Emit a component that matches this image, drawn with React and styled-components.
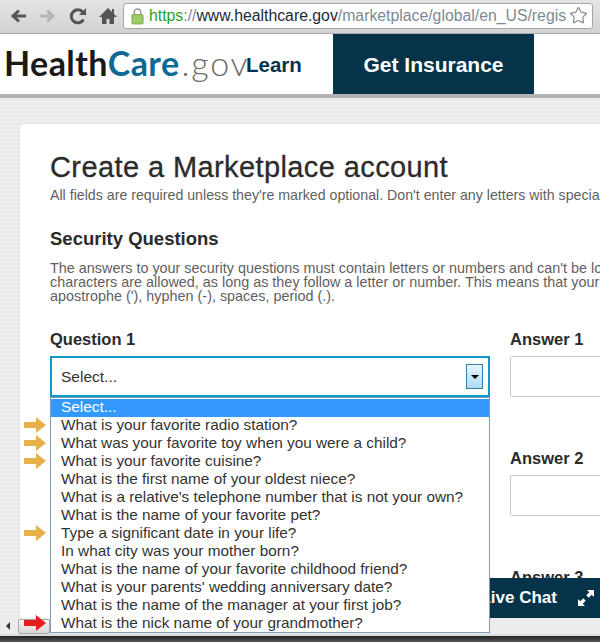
import React from "react";
import styled, { createGlobalStyle } from "styled-components";
import { Star } from "lucide-react";

const questions = [
    { text: "What is your favorite radio station?", mark: "orange" },
    { text: "What was your favorite toy when you were a child?", mark: "orange" },
    { text: "What is your favorite cuisine?", mark: "orange" },
    { text: "What is the first name of your oldest niece?" },
    { text: "What is a relative's telephone number that is not your own?" },
    { text: "What is the name of your favorite pet?" },
    { text: "Type a significant date in your life?", mark: "orange" },
    { text: "In what city was your mother born?" },
    { text: "What is the name of your favorite childhood friend?" },
    { text: "What is your parents' wedding anniversary date?" },
    { text: "What is the name of the manager at your first job?" },
    { text: "What is the nick name of your grandmother?", mark: "red" },
];

const Arrow = ({ color }) => (
    <ArrowSvg viewBox="0 0 22 16">
        <path d="M0 5h12V0l10 8-10 8v-5H0z" fill={color === "red" ? "#e5201c" : "#e8b04a"} />
    </ArrowSvg>
);

const App = () => {
    return (
        <Screen>
            <GlobalStyle />
            <Toolbar>
                <NavGroup>
                    <NavIcon viewBox="0 0 20 20">
                        <path d="M18 10H7M11 4.500L5 10l6 5.500" fill="none" stroke="#555" strokeWidth="3" />
                    </NavIcon>
                    <NavIcon viewBox="0 0 20 20">
                        <path d="M2 10h11M9 4.500l6 5.500-6 5.500" fill="none" stroke="#b5b5b5" strokeWidth="3" />
                    </NavIcon>
                    <NavIcon viewBox="0 0 20 20">
                        <path d="M15.500 13.500a6.500 6.500 0 1 1-.6-7.200" fill="none" stroke="#555" strokeWidth="3" />
                        <path d="M18 2v7h-7z" fill="#555" />
                    </NavIcon>
                    <NavIcon viewBox="0 0 20 20">
                        <path d="M10 2L1 11h3v7h4.500v-5h3v5H16v-7h3l-3-3V3h-2v3z" fill="#555" />
                    </NavIcon>
                </NavGroup>
                <UrlBar>
                    <LockIcon viewBox="0 0 14 18">
                        <path d="M3.500 8V5a3.500 3.500 0 0 1 7 0v3" fill="none" stroke="#9a9a9a" strokeWidth="1.600" />
                        <rect x="1" y="7.500" width="12" height="10" rx="1" fill="#9ccc65" stroke="#7fa650" />
                    </LockIcon>
                    <Url>
                        <UrlPart $tone="green">https</UrlPart>
                        <UrlPart $tone="gray">://</UrlPart>
                        <UrlPart $tone="dark">www.healthcare.gov</UrlPart>
                        <UrlPart $tone="gray">/marketplace/global/en_US/regis</UrlPart>
                    </Url>
                    <Star size={19} color="#8a8a8a" strokeWidth={1.500} />
                </UrlBar>
            </Toolbar>
            <Header>
                <Logo>
                    Health<LogoBlue>Care</LogoBlue>
                    <LogoGov>.gov</LogoGov>
                </Logo>
                <LearnLink>Learn</LearnLink>
                <InsuranceLink>Get Insurance</InsuranceLink>
            </Header>
            <Page>
                <Card>
                    <Title>Create a Marketplace account</Title>
                    <Note>All fields are required unless they're marked optional. Don't enter any letters with special accents.</Note>
                    <SectionTitle>Security Questions</SectionTitle>
                    <Help>
                        The answers to your security questions must contain letters or numbers and can't be longer than 30 characters.
                        <br />
                        characters are allowed, as long as they follow a letter or number. This means that your answer can include an
                        <br />
                        apostrophe ('), hyphen (-), spaces, period (.).
                    </Help>
                    <Form>
                        {[1, 2, 3].map((n) => (
                            <FormRow key={n}>
                                <Field>
                                    <Label>Question {n}</Label>
                                    <SelectBox $open={n === 1}>
                                        Select...
                                        <SelectButton>
                                            <Caret />
                                        </SelectButton>
                                    </SelectBox>
                                    {n === 1 && (
                                        <Dropdown>
                                            <Option $selected>Select...</Option>
                                            {questions.map((q) => (
                                                <Option key={q.text}>
                                                    {q.mark && (
                                                        <MarkSlot>
                                                            <Arrow color={q.mark} />
                                                        </MarkSlot>
                                                    )}
                                                    {q.text}
                                                </Option>
                                            ))}
                                        </Dropdown>
                                    )}
                                </Field>
                                <Field>
                                    <Label>Answer {n}</Label>
                                    <TextInput />
                                </Field>
                            </FormRow>
                        ))}
                    </Form>
                </Card>
            </Page>
            <ChatBar>
                Live Chat
                <ExpandIcon viewBox="0 0 18 18">
                    <path d="M10 1h7v7l-2.300-2.300-3 3-2.400-2.400 3-3zM8 17H1v-7l2.300 2.300 3-3 2.400 2.400-3 3z" fill="#fff" />
                </ExpandIcon>
            </ChatBar>
            <ScrollStrip>
                <ScrollArrow />
                <ScrollThumb />
            </ScrollStrip>
            <WindowEdge />
        </Screen>
    );
};

const GlobalStyle = createGlobalStyle`
    body {
        margin: 0;
        font-family: "Liberation Sans", Arial, sans-serif;
        background: #fff;
    }
`;
const Screen = styled.div`
    position: relative;
    display: flex;
    flex-direction: column;
    width: 600px;
    height: 642px;
    overflow: hidden;
`;
const Toolbar = styled.div`
    display: flex;
    align-items: center;
    flex: none;
    height: 34px;
    box-sizing: border-box;
    padding: 0 7px 2px 8px;
    gap: 5px;
    background: linear-gradient(#e4e4e4, #d2d2d2);
    border-bottom: 1px solid #a8a8a8;
`;
const NavGroup = styled.div`
    display: flex;
    flex: none;
    gap: 10px;
`;
const NavIcon = styled.svg`
    width: 20px;
    height: 20px;
    flex: none;
`;
const UrlBar = styled.div`
    display: flex;
    align-items: center;
    flex: 1;
    height: 26px;
    box-sizing: border-box;
    padding: 0 4px 0 7px;
    background: #fff;
    border: 1px solid #a6a6a6;
    border-radius: 3px;
`;
const LockIcon = styled.svg`
    width: 13px;
    height: 18px;
    flex: none;
`;
const Url = styled.div`
    flex: 1;
    margin-left: 5px;
    margin-right: 3px;
    overflow: hidden;
    white-space: nowrap;
    font-size: 15.800px;
`;
const UrlPart = styled.span`
    color: ${(p) => (p.$tone === "green" ? "#2e9e1f" : p.$tone === "dark" ? "#1c2a3a" : "#7d8a94")};
`;
const Header = styled.div`
    display: flex;
    align-items: stretch;
    flex: none;
    height: 60px;
    background: #fff;
    border-bottom: 4px solid #b3b3b3;
`;
const Logo = styled.div`
    display: flex;
    align-items: center;
    box-sizing: border-box;
    padding: 0 0 3px 4px;
    width: 246px;
    font-family: Lato, sans-serif;
    font-weight: 700;
    font-size: 34px;
    letter-spacing: 0.4px;
    color: #1a1a1a;
`;
const LogoBlue = styled.span`
    color: #0f6a93;
`;
const LogoGov = styled.span`
    margin-left: 2px;
    font-weight: 300;
    letter-spacing: 1.800px;
    color: #6b6b6b;
`;
const LearnLink = styled.a`
    display: flex;
    align-items: center;
    padding-top: 2px;
    width: 87px;
    font-size: 20.500px;
    font-weight: 700;
    color: #053349;
`;
const InsuranceLink = styled.a`
    display: flex;
    align-items: center;
    justify-content: center;
    padding-top: 2px;
    width: 201px;
    background: #053349;
    color: #fff;
    font-size: 21px;
    font-weight: 700;
`;
const Page = styled.div`
    flex: 1;
    min-height: 0;
    padding: 26px 0 0 20px;
    background-color: #eee;
    background-image: radial-gradient(#e8e8e8 1px, transparent 1px);
    background-size: 4px 4px;
`;
const Card = styled.div`
    box-sizing: border-box;
    width: 700px;
    height: 600px;
    padding: 27px 30px;
    background: #fff;
    border-radius: 4px 0 0 0;
    box-shadow: 0 0 2px #d0d0d0;
    white-space: nowrap;
`;
const Title = styled.h1`
    margin: 0;
    font-size: 29px;
    line-height: 32px;
    font-weight: 400;
    letter-spacing: 0.4px;
    -webkit-text-stroke: 0.3px #2b2b2b;
    color: #2b2b2b;
`;
const Note = styled.p`
    margin: 4px 0 0;
    font-size: 14.200px;
    line-height: 16px;
    color: #5f5f5f;
`;
const SectionTitle = styled.h2`
    margin: 25px 0 0;
    font-size: 18.500px;
    line-height: 22px;
    color: #2b2b2b;
`;
const Help = styled.p`
    margin: 11px 0 0;
    font-size: 14.400px;
    line-height: 14px;
    color: #5f5f5f;
`;
const Form = styled.div`
    display: flex;
    flex-direction: column;
    margin-top: 26px;
`;
const FormRow = styled.div`
    display: grid;
    grid-template-columns: 440px 1fr;
    column-gap: 20px;
    height: 119px;
`;
const Field = styled.div`
    position: relative;
`;
const Label = styled.label`
    display: block;
    height: 27px;
    font-size: 16.500px;
    font-weight: 700;
    line-height: 20px;
    color: #2b2b2b;
`;
const SelectBox = styled.div`
    display: flex;
    align-items: center;
    justify-content: space-between;
    box-sizing: border-box;
    height: 41px;
    padding: 0 5px 0 9px;
    border: 2px solid ${(p) => (p.$open ? "#0d9acb" : "#ccc")};
    font-size: 15.500px;
    color: #333;
`;
const SelectButton = styled.span`
    display: flex;
    align-items: center;
    justify-content: center;
    box-sizing: border-box;
    width: 17px;
    height: 25px;
    border: 1px solid #2d7fa8;
    background: linear-gradient(#e9f5fc, #aadcf7);
`;
const Caret = styled.span`
    width: 0;
    height: 0;
    border-left: 4px solid transparent;
    border-right: 4px solid transparent;
    border-top: 4px solid #000;
`;
const Dropdown = styled.div`
    position: absolute;
    z-index: 3;
    top: 68px;
    left: 0;
    width: 440px;
    height: 236px;
    box-sizing: border-box;
    padding-top: 1px;
    background: #fff;
    border: 1px solid #7f9db9;
`;
const Option = styled.div`
    position: relative;
    height: 18px;
    padding-left: 10px;
    font-size: 15.350px;
    line-height: 16px;
    color: ${(p) => (p.$selected ? "#fff" : "#333")};
    background: ${(p) => (p.$selected ? "#3399ff" : "transparent")};
`;
const MarkSlot = styled.span`
    position: absolute;
    left: -27px;
    top: 0;
    line-height: 0;
`;
const ArrowSvg = styled.svg`
    width: 22px;
    height: 16px;
`;
const TextInput = styled.div`
    box-sizing: border-box;
    height: 41px;
    border: 1px solid #ccc;
    border-radius: 2px;
`;
const ChatBar = styled.div`
    position: absolute;
    z-index: 2;
    right: 0;
    top: 578px;
    display: flex;
    align-items: center;
    justify-content: flex-end;
    box-sizing: border-box;
    width: 200px;
    height: 40px;
    padding-right: 5px;
    gap: 20px;
    background: #053349;
    color: #fff;
    font-size: 17px;
    font-weight: 700;
`;
const ExpandIcon = styled.svg`
    width: 18px;
    height: 18px;
`;
const ScrollStrip = styled.div`
    position: absolute;
    z-index: 1;
    left: 0;
    right: 0;
    bottom: 8px;
    display: flex;
    align-items: center;
    height: 16px;
    background: #ececec;
`;
const ScrollArrow = styled.span`
    width: 0;
    height: 0;
    margin-left: 6px;
    border-top: 4px solid transparent;
    border-bottom: 4px solid transparent;
    border-right: 4px solid #333;
`;
const ScrollThumb = styled.span`
    width: 32px;
    height: 15px;
    margin-left: 8px;
    box-sizing: border-box;
    background: linear-gradient(#f4f4f4, #d8d8d8);
    border: 1px solid #a8a8a8;
    border-radius: 2px;
`;
const WindowEdge = styled.div`
    position: absolute;
    z-index: 1;
    left: 0;
    right: 0;
    bottom: 0;
    height: 8px;
    background: linear-gradient(#ddd 0, #ddd 2px, #222 2px, #555);
`;

export default App;
